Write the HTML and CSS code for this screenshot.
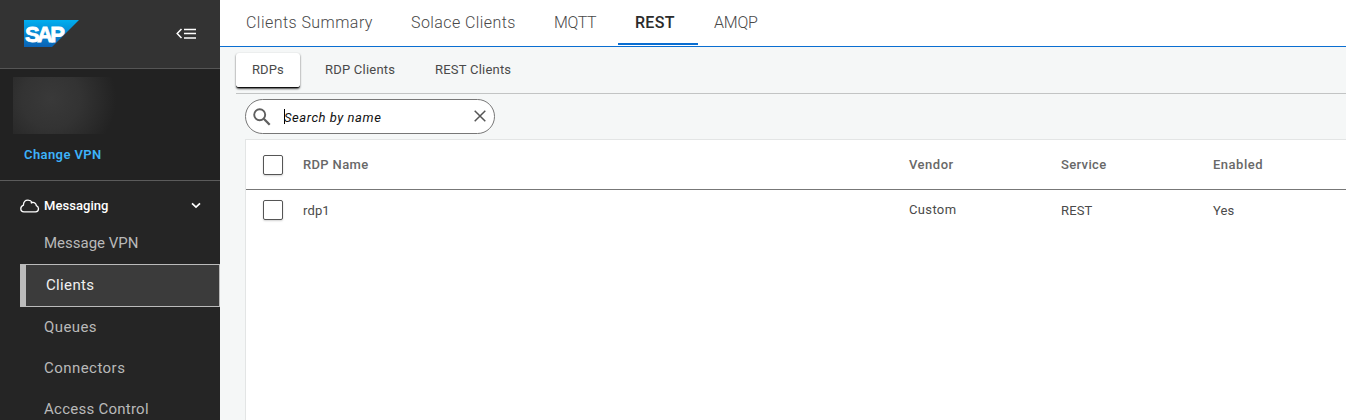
FILE: index.html
```html
<!DOCTYPE html>
<html lang="en">
<head>
<meta charset="utf-8">
<title>RDPs</title>
<link rel="stylesheet" href="styles.css">
</head>
<body>
<div class="app">
  <aside class="sidebar">
    <header class="brand">
      <svg class="logo" width="55" height="27" viewBox="0 0 55 27">
        <defs><linearGradient id="sap" x1="0" y1="0" x2="0" y2="1"><stop offset="0" stop-color="#00aeef"/><stop offset="1" stop-color="#0a62b5"/></linearGradient></defs>
        <path d="M0 0H55L28 27H0Z" fill="url(#sap)"/>
        <text x="1" y="21.500" class="logo-text">SAP</text>
      </svg>
      <svg class="collapse" width="20" height="12" viewBox="0 0 20 12" fill="none" stroke="#fff">
        <path d="M5.500 1L1.200 5.500L5.500 10" stroke-width="1.500"/>
        <path d="M8 1.500H20M8 5.500H20M8 10H20" stroke-width="1.300"/>
      </svg>
    </header>
    <section class="vpn">
      <div class="vpn-name"></div>
      <a class="vpn-link">Change VPN</a>
    </section>
    <nav class="nav">
      <div class="nav-group">
        <svg width="20" height="14" viewBox="0 0 20 14" fill="none" stroke="#fff" stroke-width="1.300"><path d="M4 12.800C2 12.800.8 11.500.8 9.700C.8 8 1.900 6.800 3.400 6.200C3.500 3.200 5.500 1.200 8 1.200C10 1.200 11.300 2 12.300 3.500C14.500 3.200 16.200 4.500 16.300 6.600C17.700 7.200 18.500 8.300 18.500 9.800C18.500 11.600 17.200 12.800 15.500 12.800ZM12.300 3.500C11.700 3.600 11.200 3.900 10.800 4.300"/></svg>
        <span class="nav-title">Messaging</span>
        <svg class="chevron" width="10" height="7" viewBox="0 0 10 7" fill="none" stroke="#fff" stroke-width="1.700"><path d="M1 1.300L5 5.100L9 1.300"/></svg>
      </div>
      <a class="nav-item">Message VPN</a>
      <a class="nav-item active">Clients</a>
      <a class="nav-item nav-queues">Queues</a>
      <a class="nav-item nav-connectors">Connectors</a>
      <a class="nav-item nav-access">Access Control</a>
    </nav>
  </aside>
  <main class="main">
    <nav class="tabs">
      <a class="tab tab-summary">Clients Summary</a>
      <a class="tab tab-solace">Solace Clients</a>
      <a class="tab tab-mqtt">MQTT</a>
      <a class="tab tab-rest selected">REST</a>
      <a class="tab tab-amqp">AMQP</a>
    </nav>
    <nav class="subtabs">
      <a class="subtab sub-rdps selected">RDPs</a>
      <a class="subtab sub-rdpc">RDP Clients</a>
      <a class="subtab sub-restc">REST Clients</a>
    </nav>
    <div class="search">
      <svg class="magnifier" width="18" height="18" viewBox="0 0 18 18" fill="none" stroke="#5f5f5f"><circle cx="6.700" cy="6.700" r="5.500" stroke-width="1.900"/><path d="M10.800 10.800L16.700 16.700" stroke-width="2.300"/></svg>
      <span class="caret"></span>
      <span class="placeholder">Search by name</span>
      <svg class="clear" width="12" height="12" viewBox="0 0 12 12" fill="none" stroke="#555" stroke-width="1.500"><path d="M.7.7L11.300 11.300M11.300.7L.7 11.300"/></svg>
    </div>
    <section class="table">
      <div class="row head">
        <span class="check"></span>
        <span>RDP Name</span><span class="h-vendor">Vendor</span><span>Service</span><span class="h-enabled">Enabled</span>
      </div>
      <div class="row body">
        <span class="check"></span>
        <span>rdp1</span><span class="c-vendor">Custom</span><span>REST</span><span>Yes</span>
      </div>
    </section>
  </main>
</div>
</body>
</html>
```
FILE: styles.css
```css
* { box-sizing: border-box; }
body { margin: 0; font-family: Roboto, "Liberation Sans", sans-serif; font-size: 13px; color: #4a4a4a; }
.app { display: flex; width: 1346px; height: 420px; overflow: hidden; background: #f5f7f7; }

.sidebar { width: 220px; flex: none; background: #252525; }
.brand { height: 69px; padding: 20px 24px 0 24px; display: flex; justify-content: space-between; background: #333; border-bottom: 1px solid #555; }
.collapse { margin-top: 8px; }
.logo { overflow: visible; }
.logo-text { font: 700 22px "Liberation Sans", Arial, sans-serif; letter-spacing: -2.6px; fill: #fff; stroke: #fff; stroke-width: .8px; }
.vpn { height: 112px; padding-top: 8px; background: #222; border-bottom: 1px solid #5b5b5b; }
.vpn-name { width: 110px; height: 57px; margin-left: 13px; background: radial-gradient(ellipse 65px 65px at 38px 22px, #393939 0%, #333 45%, #2a2a2a 75%, #222 100%); }
.vpn-link { display: block; margin: 12px 0 0 24px; line-height: 18px; color: #3db2fa; font-weight: 600; letter-spacing: .4px; }
.nav-group { display: flex; align-items: center; height: 41px; padding: 8px 19px 0 20px; }
.nav-title { margin-left: 4px; color: #fff; font-weight: 500; letter-spacing: .05px; }
.chevron { margin-left: auto; }
.nav-item { display: flex; align-items: center; height: 41px; padding-left: 44px; font-size: 15px; color: #b9b9b9; }
.nav-item.active { height: 43px; margin: 1px 0 0 20px; padding: 0 0 2px 20px; border: 1px solid #bbb; border-left-width: 6px; background: #3b3b3b; color: #f0f0f0; letter-spacing: .35px; }
.nav-queues, .nav-connectors, .nav-access { padding-bottom: 2px; }
.nav-queues { letter-spacing: .4px; }
.nav-connectors { letter-spacing: .45px; }
.nav-access { letter-spacing: .25px; }

.main { flex: 1; min-width: 0; }
.tabs { display: flex; height: 47px; padding-left: 10px; background: #fff; border-bottom: 1px solid #0a6ed1; }
.tab { height: 45px; padding-left: 16px; font-size: 16px; line-height: 45px; color: #484848; font-weight: 300; letter-spacing: .45px; }
.tab-summary { width: 165px; }
.tab-solace { width: 143px; letter-spacing: .42px; }
.tab-mqtt { width: 80px; letter-spacing: -.3px; }
.tab-rest { width: 80px; letter-spacing: .3px; }
.tab-amqp { letter-spacing: -.2px; }
.tab.selected { padding-left: 17px; border-bottom: 2px solid #0a6ed1; color: #2b2b2b; font-weight: 500; }

.subtabs { display: flex; height: 47px; margin-left: 16px; padding-top: 6px; border-bottom: 1px solid #c2c4c4; }
.subtab { height: 35px; padding-left: 16px; line-height: 33px; color: #4a4a4a; letter-spacing: .22px; }
.sub-rdps { width: 64px; margin-right: 9px; letter-spacing: .1px; }
.sub-rdpc { width: 110px; }
.subtab.selected { border-radius: 3px; background: #fff; border-bottom: 1px solid #111; box-shadow: 0 1px 2px rgba(0,0,0,.7); }

.search { display: flex; align-items: center; width: 250px; height: 35px; margin: 5px 0 5px 25px; padding: 0 8px 0 7px; border: 1px solid #777; border-radius: 18px; background: #fff; color: #111; }
.magnifier { margin-top: 1px; }
.caret { width: 1px; height: 15px; margin-left: 13px; background: #000; }
.placeholder { margin: 1px 0 0 -1px; font-style: italic; white-space: nowrap; letter-spacing: .55px; }
.clear { margin: -2px 0 0 auto; }

.table { height: 290px; margin-left: 25px; background: #fff; border: 1px solid #e3e5e5; border-right: 0; }
.row { display: grid; grid-template-columns: 40px 606px 152px 152px 133px; align-items: center; padding-left: 17px; letter-spacing: .3px; }
.head { height: 50px; border-bottom: 1px solid #777; color: #686868; font-weight: 500; letter-spacing: .35px; }
.h-vendor, .h-enabled { letter-spacing: .5px; }
.body { height: 41px; letter-spacing: .15px; }
.check { width: 20px; height: 20px; margin-top: 1px; border: 1px solid #555; border-radius: 2px; background: #fff; box-shadow: 0 1px 2px rgba(0,0,0,.18); }
.body .check { margin-top: -1px; }
.c-vendor { padding-bottom: 2px; letter-spacing: .35px; }
```
